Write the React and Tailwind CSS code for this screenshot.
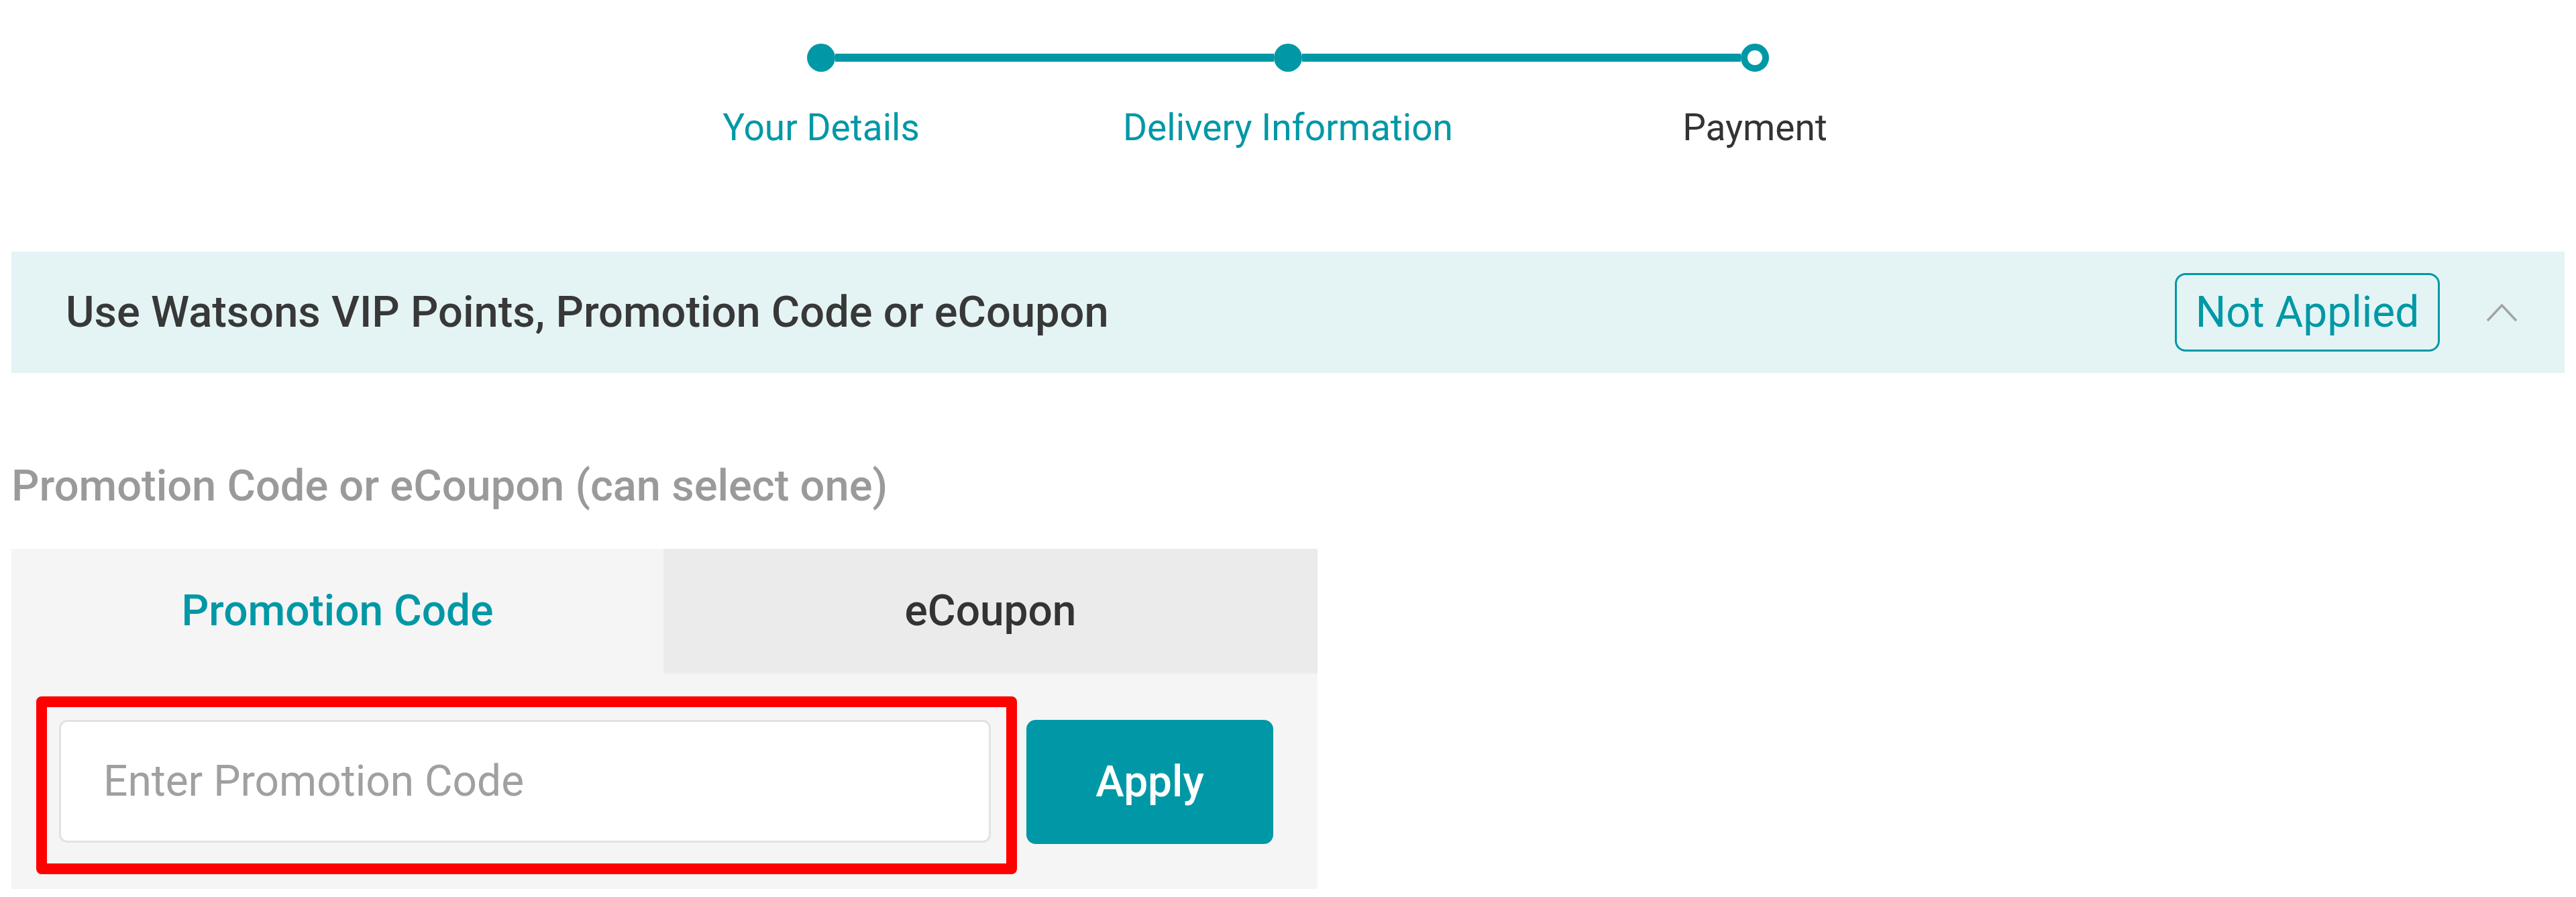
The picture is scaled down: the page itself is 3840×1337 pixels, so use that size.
import { useState } from "react";

const STEPS = [
  { label: "Your Details", done: true },
  { label: "Delivery Information", done: true },
  { label: "Payment", done: false },
];

function Stepper() {
  return (
    <div className="mx-auto w-[2088px] pt-[65px]">
      <div className="flex items-center px-[327px]">
        <span className="h-[42px] w-[42px] shrink-0 rounded-full bg-[#0098a6]" />
        <span className="h-[12px] flex-1 bg-[#0098a6]" />
        <span className="h-[42px] w-[42px] shrink-0 rounded-full bg-[#0098a6]" />
        <span className="h-[12px] flex-1 bg-[#0098a6]" />
        <span className="h-[42px] w-[42px] shrink-0 rounded-full border-[10px] border-[#0098a6] bg-white" />
      </div>
      <div className="mt-[51px] grid grid-cols-3 text-center text-[55px] leading-[64px]">
        {STEPS.map((s) => (
          <span key={s.label} className={s.done ? "text-[#0098a6]" : "text-[#333333]"}>
            {s.label}
          </span>
        ))}
      </div>
    </div>
  );
}

export default function App() {
  const [tab, setTab] = useState("promo");
  const [code, setCode] = useState("");

  return (
    <div className="min-h-[1337px] w-[3840px] bg-white font-['Roboto',sans-serif]">
      <Stepper />

      <div className="mx-[17px] mt-[153px] flex h-[181px] items-center bg-[#e4f4f5] pl-[81px] pr-[70px]">
        <h2 className="text-[65px] font-medium leading-[75px] text-[#383838]">
          Use Watsons VIP Points, Promotion Code or eCoupon
        </h2>
        <span className="ml-auto flex h-[117px] w-[395px] items-center justify-center rounded-[16px] border-[3px] border-[#0098a6] text-[64px] leading-none text-[#0098a6]">
          Not Applied
        </span>
        <svg className="ml-[69px]" width="47" height="28" viewBox="0 0 47 28" fill="none">
          <path d="M2 26L23.5 3L45 26" stroke="#a3a3a3" strokeWidth="3.5" />
        </svg>
      </div>

      <p className="ml-[17px] mt-[131px] text-[65px] font-medium leading-[75px] text-[#9a9a9a]">
        Promotion Code or eCoupon (can select one)
      </p>

      <div className="ml-[17px] mt-[56px] w-[1947px] bg-[#f5f5f5] pb-[22px]">
        <div className="grid h-[186px] grid-cols-[972px_1fr] text-[64px] font-medium">
          <button
            type="button"
            onClick={() => setTab("promo")}
            className={`flex items-center justify-center ${
              tab === "promo" ? "bg-[#f5f5f5] text-[#0098a6]" : "bg-[#ebebeb] text-[#333333]"
            }`}
          >
            Promotion Code
          </button>
          <button
            type="button"
            onClick={() => setTab("coupon")}
            className={`flex items-center justify-center ${
              tab === "coupon" ? "bg-[#f5f5f5] text-[#0098a6]" : "bg-[#ebebeb] text-[#333333]"
            }`}
          >
            eCoupon
          </button>
        </div>

        <div className="flex items-start pl-[37px] pt-[34px]">
          <div className="h-[265px] w-[1462px] rounded-[8px] border-[16px] border-[#ff0000] pl-[18px] pt-[19px]">
            <input
              value={code}
              onChange={(e) => setCode(e.target.value)}
              placeholder="Enter Promotion Code"
              className="h-[183px] w-[1389px] rounded-[12px] border-[3px] border-[#e2e2e2] bg-white pl-[63px] text-[64px] text-[#333333] outline-none placeholder:text-[#a0a0a0]"
            />
          </div>
          <button
            type="button"
            className="ml-[14px] mt-[35px] h-[185px] w-[368px] rounded-[14px] bg-[#0098a6] text-[64px] font-medium text-white"
          >
            Apply
          </button>
        </div>
      </div>
    </div>
  );
}
